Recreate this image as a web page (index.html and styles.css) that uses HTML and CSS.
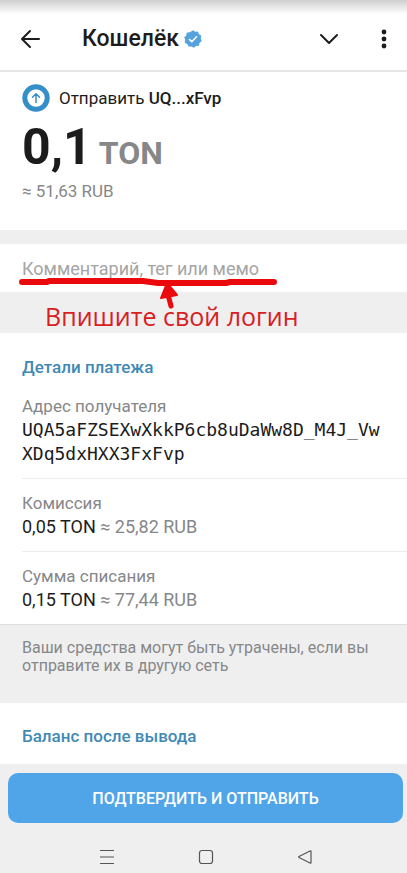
FILE: index.html
```html
<!DOCTYPE html>
<html lang="ru">
<head>
    <meta charset="UTF-8">
    <meta name="viewport" content="width=device-width, initial-scale=1.0">
    <title>Кошелёк</title>
    <link rel="stylesheet" href="styles.css">
</head>
<body>
    <header class="topbar">
        <button type="button" class="icon-button" aria-label="Назад">
            <svg width="20" height="20" viewBox="0 0 20 20" fill="none" stroke="#1c1c1c" stroke-width="2" stroke-linecap="round" stroke-linejoin="round"><path d="M19 10H2M10 2L2 10l8 8"/></svg>
        </button>
        <h1 class="title">Кошелёк</h1>
        <svg class="verified" width="18" height="18" viewBox="0 0 18 18"><path fill="#55a3dc" stroke="#55a3dc" stroke-width="1.4" stroke-linejoin="round" d="M9 1l2 1.5 2.5-.2.9 2.4 2.2 1.3L16 8.500l.9 2.400-2 1.600-.6 2.500-2.600.2L9.700 17 7.500 15.600 5 15.900 3.900 13.500 1.500 12.400 2 9.800 1 7.500 2.900 5.700 3.400 3.100 6 3z"/><path fill="none" stroke="#fff" stroke-width="1.6" stroke-linecap="round" stroke-linejoin="round" d="M5.500 9.500l2.300 2.200 4.700-4.900"/></svg>
        <button type="button" class="icon-button push" aria-label="Свернуть">
            <svg width="20" height="20" viewBox="0 0 20 20" fill="none" stroke="#1c1c1c" stroke-width="2" stroke-linecap="round" stroke-linejoin="round"><path d="M2 6l8 8 8-8"/></svg>
        </button>
        <button type="button" class="icon-button" aria-label="Меню">
            <svg width="6" height="20" viewBox="0 0 6 20" fill="#1c1c1c"><circle cx="3" cy="3" r="2.400"/><circle cx="3" cy="10" r="2.400"/><circle cx="3" cy="17" r="2.400"/></svg>
        </button>
    </header>

    <main>
        <section class="amount">
            <div class="recipient">
                <svg width="28" height="28" viewBox="0 0 28 28" fill="none"><circle cx="14" cy="14" r="11.200" stroke="#348fc8" stroke-width="5"/><path stroke="#348fc8" stroke-width="1.500" stroke-linecap="round" stroke-linejoin="round" d="M14 18.500V10M10.500 13.200L14 9.700l3.500 3.500"/></svg>
                <span>Отправить <b>UQ...xFvp</b></span>
            </div>
            <div class="sum">0,1<span class="currency"> TON</span></div>
            <div class="fiat">≈ 51,63 RUB</div>
        </section>

        <section class="comment">
            <input type="text" class="comment-input" aria-label="Комментарий" placeholder="Комментарий, тег или мемо">
            <svg class="marker" width="262" height="34" viewBox="0 0 262 34" fill="none" stroke="#ea0a0e" stroke-linecap="round" stroke-linejoin="round"><path stroke-width="6" d="M4 6H29L31 5H125L140 7H208L212 6H256"/><path stroke-width="5" d="M149 15L153 30"/><path fill="#ea0a0e" stroke-width="2" d="M149 7L143 22L159 19Z"/></svg>
        </section>
        <p class="hint">Впишите свой логин</p>

        <section class="details">
            <h2 class="heading">Детали платежа</h2>
            <dl class="rows">
                <div class="row">
                    <dt>Адрес получателя</dt>
                    <dd class="address">UQA5aFZSEXwXkkP6cb8uDaWw8D_M4J_VwXDq5dxHXX3FxFvp</dd>
                </div>
                <div class="row">
                    <dt>Комиссия</dt>
                    <dd>0,05 TON <span class="muted">≈ 25,82 RUB</span></dd>
                </div>
                <div class="row">
                    <dt>Сумма списания</dt>
                    <dd>0,15 TON <span class="muted">≈ 77,44 RUB</span></dd>
                </div>
            </dl>
        </section>
        <p class="warning">Ваши средства могут быть утрачены, если вы отправите их в другую сеть</p>

        <section class="balance">
            <h2 class="heading">Баланс после вывода</h2>
        </section>
    </main>

    <footer class="footer">
        <button type="submit" class="confirm">ПОДТВЕРДИТЬ И ОТПРАВИТЬ</button>
        <nav class="system-nav">
            <button type="button" class="icon-button" aria-label="Недавние">
                <svg width="16" height="16" viewBox="0 0 16 16" fill="none" stroke="#555" stroke-width="1.200"><path d="M1 1.500h14M1 8h14M1 14.500h14"/></svg>
            </button>
            <button type="button" class="icon-button" aria-label="Домой">
                <svg width="16" height="16" viewBox="0 0 16 16" fill="none" stroke="#555" stroke-width="1.200"><rect x="1.500" y="1.500" width="13" height="13" rx="2.500"/></svg>
            </button>
            <button type="button" class="icon-button" aria-label="Назад">
                <svg width="16" height="16" viewBox="0 0 16 16" fill="none" stroke="#555" stroke-width="1.200" stroke-linejoin="round"><path d="M14 2.500v11q0 1-1 .5L2 8.500q-.8-.5 0-1L13 2q1-.5 1 .5z"/></svg>
            </button>
        </nav>
    </footer>
</body>
</html>
```
FILE: styles.css
```css
* {
    box-sizing: border-box;
}
body {
    margin: 0;
    font-family: Roboto, sans-serif;
    font-size: 17px;
    line-height: 24px;
    color: #1c1c1c;
    background-color: #efefef;
}
h1, h2, p, dl, dd {
    margin: 0;
}
section {
    background-color: #fff;
    padding: 0 22px;
}
.icon-button {
    display: flex;
    padding: 0;
    border: none;
    background: none;
    cursor: pointer;
}

/* header */
.topbar {
    display: flex;
    align-items: center;
    padding: 21px 20px 13px;
    border-bottom: 2px solid #e6e6e6;
    background: linear-gradient(#cfcfcf, #fff 14px);
}
.title {
    margin-left: 42px;
    font-size: 23px;
    line-height: 36px;
    font-weight: 500;
}
.verified {
    margin-left: 5px;
}
.push {
    margin-left: auto;
    margin-right: 42px;
}

/* amount */
.amount {
    padding-top: 12px;
    padding-bottom: 27px;
}
.recipient {
    display: flex;
    align-items: center;
    gap: 9px;
    line-height: 28px;
}
.recipient b {
    font-weight: 500;
}
.sum {
    padding-top: 3px;
    font-size: 50px;
    line-height: 64px;
    font-weight: 700;
}
.currency {
    font-size: 32px;
    line-height: 32px;
    color: #868789;
}
.fiat {
    color: #868789;
}

/* comment */
.comment {
    position: relative;
    margin-top: 14px;
}
.comment-input {
    display: block;
    width: 100%;
    height: 48px;
    padding: 0;
    border: none;
    outline: none;
    font-family: inherit;
    font-size: 18px;
    background: none;
}
.comment-input::placeholder {
    color: #a5a5a5;
}
.marker {
    position: absolute;
    left: 18px;
    top: 32px;
    pointer-events: none;
}
.hint {
    padding: 8px 45px 1px;
    font-family: "Open Sans", sans-serif;
    font-size: 25px;
    line-height: 32px;
    color: #d9201f;
}

/* details */
.heading {
    font-size: 17px;
    line-height: 24px;
    font-weight: 500;
    color: #4089b4;
}
.details {
    padding-top: 22px;
    padding-right: 0;
}
.rows {
    padding-top: 3px;
}
.row {
    padding: 12px 0;
    border-bottom: 1px solid #ececec;
}
.row:last-child {
    border-bottom: none;
}
.row dt {
    color: #868789;
}
.row dd {
    font-size: 18px;
}
.row .address {
    font-family: "DejaVu Sans Mono", monospace;
    padding-right: 22px;
    word-break: break-all;
}
.muted {
    color: #868789;
}
.warning {
    padding: 14px 22px 28px;
    border-top: 1px solid #dedede;
    font-size: 16px;
    line-height: 18px;
    color: #868789;
}
.balance {
    padding-top: 21px;
    padding-bottom: 16px;
}

/* footer */
.footer {
    padding: 9px 4px 8px 8px;
}
.confirm {
    display: block;
    width: 100%;
    height: 50px;
    border: none;
    border-radius: 10px;
    background-color: #50a5e9;
    color: #fff;
    font-family: inherit;
    font-size: 16px;
    font-weight: 500;
    cursor: pointer;
}
.system-nav {
    display: flex;
    justify-content: center;
    gap: 83px;
    padding-top: 26px;
}
```
